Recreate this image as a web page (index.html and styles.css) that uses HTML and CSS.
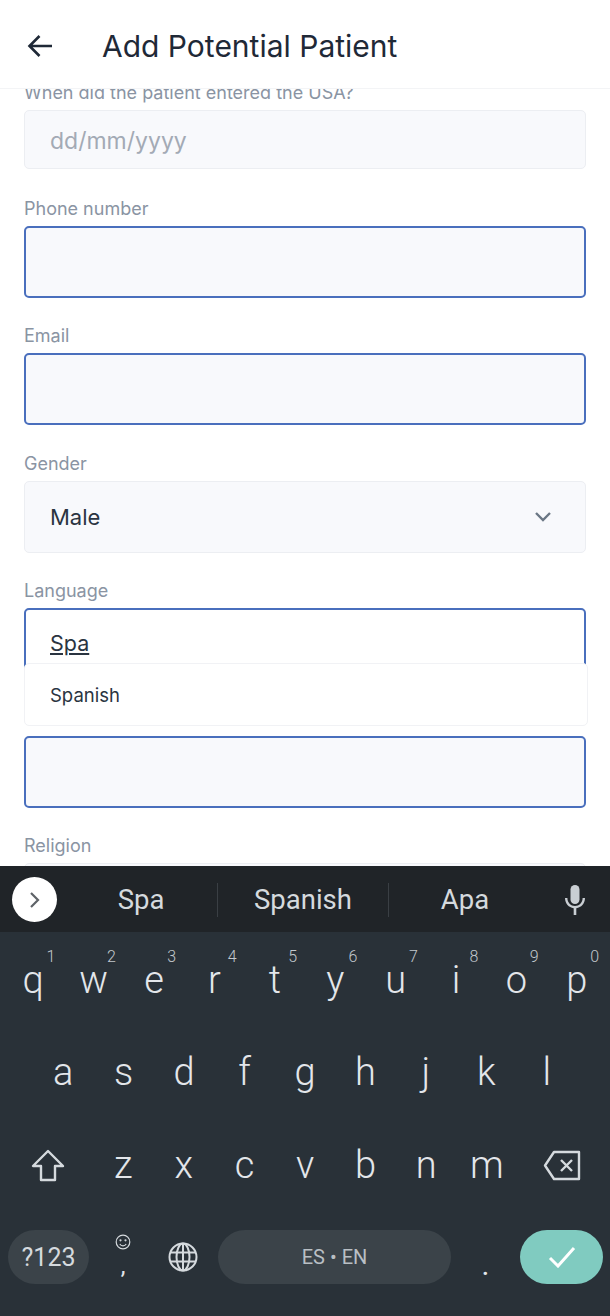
FILE: index.html
```html
<!DOCTYPE html>
<html lang="en">
<head>
    <meta charset="UTF-8">
    <meta name="viewport" content="width=device-width, initial-scale=1.0">
    <title>Add Potential Patient</title>
    <link rel="stylesheet" href="styles.css">
</head>
<body>
    <div class="screen">
        <header class="topbar">
            <svg class="back-icon" width="26" height="24" viewBox="0 0 26 24" fill="none" stroke="#1f2937" stroke-width="2.6">
                <path d="M25 12H2.5M12.5 2L2.5 12l10 10"/>
            </svg>
            <h1>Add Potential Patient</h1>
        </header>

        <main class="form">
            <div class="field first">
                <label>When did the patient entered the USA?</label>
                <div class="input short placeholder">dd/mm/yyyy</div>
            </div>
            <div class="field">
                <label>Phone number</label>
                <div class="input focused"></div>
            </div>
            <div class="field">
                <label>Email</label>
                <div class="input focused"></div>
            </div>
            <div class="field">
                <label>Gender</label>
                <div class="input select">
                    <span>Male</span>
                    <svg width="18" height="11" viewBox="0 0 18 11" fill="none" stroke="#6b7785" stroke-width="2.4">
                        <path d="M2 2l7 7 7-7"/>
                    </svg>
                </div>
            </div>
            <div class="field language">
                <label>Language</label>
                <div class="input typing"><u>Spa</u></div>
                <!-- Autocomplete dropdown -->
                <div class="dropdown">Spanish</div>
            </div>
            <div class="field after-language">
                <div class="input focused"></div>
            </div>
            <div class="field">
                <label>Religion</label>
                <div class="input"></div>
            </div>
        </main>

        <section class="keyboard">
            <div class="suggestions">
                <span class="expand">
                    <svg width="14" height="20" viewBox="0 0 14 20" fill="none" stroke="#5f6368" stroke-width="2.2">
                        <path d="M3 3l7 7-7 7"/>
                    </svg>
                </span>
                <span class="word first-word">Spa</span>
                <span class="word mid-word">Spanish</span>
                <span class="word last-word">Apa</span>
                <svg class="mic" width="22" height="30" viewBox="0 0 22 30" fill="#c9ced3">
                    <rect x="6.500" y="0" width="9" height="19" rx="4.500"/>
                    <path d="M1 13h2.400c0 4.600 3.400 8 7.600 8s7.600-3.400 7.600-8H21c0 5.400-3.800 9.600-8.700 10.200V30H9.700v-6.800C4.800 22.600 1 18.400 1 13z"/>
                </svg>
            </div>

            <div class="keys">
                <div class="row top-row">
                    <span class="key">q<sup>1</sup></span>
                    <span class="key">w<sup>2</sup></span>
                    <span class="key">e<sup>3</sup></span>
                    <span class="key">r<sup>4</sup></span>
                    <span class="key">t<sup>5</sup></span>
                    <span class="key">y<sup>6</sup></span>
                    <span class="key">u<sup>7</sup></span>
                    <span class="key">i<sup>8</sup></span>
                    <span class="key">o<sup>9</sup></span>
                    <span class="key">p<sup>0</sup></span>
                </div>
                <div class="row mid-row">
                    <span class="key">a</span>
                    <span class="key">s</span>
                    <span class="key">d</span>
                    <span class="key">f</span>
                    <span class="key">g</span>
                    <span class="key">h</span>
                    <span class="key">j</span>
                    <span class="key">k</span>
                    <span class="key">l</span>
                </div>
                <div class="row shift-row">
                    <span class="key side">
                        <svg width="34" height="33" viewBox="0 0 34 33" fill="none" stroke="#d5dade" stroke-width="2.400" stroke-linejoin="round">
                            <path d="M17 2L2 17h8v14h14V17h8z"/>
                        </svg>
                    </span>
                    <span class="key">z</span>
                    <span class="key">x</span>
                    <span class="key">c</span>
                    <span class="key">v</span>
                    <span class="key">b</span>
                    <span class="key">n</span>
                    <span class="key">m</span>
                    <span class="key side">
                        <svg width="38" height="31" viewBox="0 0 38 31" fill="none" stroke="#d5dade" stroke-width="2.400" stroke-linejoin="round">
                            <path d="M11 2h25v27H11L2 15.500z"/>
                            <path d="M18 10l11 11M29 10L18 21"/>
                        </svg>
                    </span>
                </div>
                <div class="row bottom-row">
                    <span class="pill symbols">?123</span>
                    <span class="comma">
                        <svg width="16" height="16" viewBox="0 0 16 16" fill="none" stroke="#d5dade" stroke-width="1.200">
                            <circle cx="8" cy="8" r="6.800"/>
                            <circle cx="5.500" cy="6.300" r="0.500"/>
                            <circle cx="10.500" cy="6.300" r="0.500"/>
                            <path d="M4.800 10c.8 1.300 1.900 1.800 3.200 1.800s2.400-.5 3.200-1.800"/>
                        </svg>
                        <b>,</b>
                    </span>
                    <svg class="globe" width="30" height="30" viewBox="0 0 30 30" fill="none" stroke="#d5dade" stroke-width="2">
                        <circle cx="15" cy="15" r="13.500"/>
                        <ellipse cx="15" cy="15" rx="6.500" ry="13.500"/>
                        <path d="M15 1.500v27M2.500 10.500h25M2.500 19.500h25"/>
                    </svg>
                    <span class="pill space">ES • EN</span>
                    <span class="period">.</span>
                    <span class="pill enter">
                        <svg width="28" height="22" viewBox="0 0 28 22" fill="none" stroke="#fff" stroke-width="3">
                            <path d="M2 12l8 8L26 2"/>
                        </svg>
                    </span>
                </div>
            </div>
        </section>
    </div>
</body>
</html>
```
FILE: styles.css
```css
* {
    box-sizing: border-box;
}

html, body {
    margin: 0;
    padding: 0;
}

body {
    font-family: Inter, "Noto Sans", sans-serif;
    background-color: #fff;
}

.screen {
    width: 610px;
    height: 1316px;
    display: flex;
    flex-direction: column;
    overflow: hidden;
}

.topbar {
    height: 89px;
    flex: none;
    display: flex;
    align-items: center;
    padding: 4px 0 0 27px;
    border-bottom: 1px solid #f3f4f6;
}

.topbar h1 {
    margin: 0 0 0 49px;
    font-size: 30px;
    font-weight: 400;
    color: #1f2937;
}

.form {
    height: 777px;
    flex: none;
    overflow: hidden;
    padding: 0 24px;
}

.field {
    margin-bottom: 25.500px;
    position: relative;
}

.field.first {
    margin-top: -9px;
    margin-bottom: 26.500px;
}

.field.language {
    z-index: 2;
}

/* label of this field sits under the dropdown */
.field.after-language {
    padding-top: 30px;
}

.field label {
    display: block;
    height: 26px;
    margin-bottom: 4px;
    font-size: 18px;
    line-height: 26px;
    color: #8a94a3;
}

.input {
    height: 72px;
    width: 562px;
    padding: 0 25px;
    display: flex;
    align-items: center;
    justify-content: space-between;
    font-size: 22px;
    color: #2a3441;
    background-color: #f8f9fc;
    border: 1px solid #eceef2;
    border-radius: 5px;
}

.input.short {
    height: 59px;
}

.placeholder {
    padding-top: 2px;
    font-size: 23px;
    color: #a3aab5;
}

.input.focused {
    border: 2px solid #4a6fbd;
}

.input.select {
    padding-right: 33px;
}

.input.typing {
    background-color: #fff;
    border: 2px solid #4a6fbd;
    align-items: flex-start;
    padding: 20px 24px 0;
    font-size: 21.500px;
}

.dropdown {
    position: absolute;
    top: 85px;
    left: 0;
    width: 564px;
    height: 63px;
    padding: 0 25px;
    display: flex;
    align-items: center;
    font-size: 18.500px;
    color: #2a3441;
    background-color: #fff;
    border: 1px solid #f1f2f5;
    border-radius: 5px;
}

.keyboard {
    flex: 1;
    display: flex;
    flex-direction: column;
    font-family: Roboto, "Liberation Sans", sans-serif;
    background-color: #293138;
    color: #e3e6ea;
}

.suggestions {
    height: 66px;
    flex: none;
    position: relative;
    display: flex;
    align-items: center;
    padding-top: 1px;
    background-color: #202428;
    font-size: 27.500px;
}

.expand {
    width: 45px;
    height: 45px;
    margin-left: 12px;
    flex: none;
    display: flex;
    align-items: center;
    justify-content: center;
    border-radius: 50%;
    background-color: #fff;
}

.word {
    height: 34px;
    display: flex;
    align-items: center;
    justify-content: center;
    color: #d5dade;
}

.first-word {
    width: 160px;
    padding-left: 8px;
}

.mid-word {
    width: 172px;
    border-left: 1px solid #3a3f44;
    border-right: 1px solid #3a3f44;
}

.last-word {
    width: 152px;
}

.mic {
    margin-left: 23px;
}

.keys {
    flex: 1;
    padding-top: 2px;
}

.row {
    height: 92px;
    display: flex;
    align-items: center;
    font-size: 38px;
}

.top-row {
    padding: 0 3px;
}

.mid-row {
    padding: 0 33px;
}

.shift-row {
    height: 94px;
    padding: 0 3px;
}

.key {
    flex: 1;
    position: relative;
    text-align: center;
    display: flex;
    justify-content: center;
    align-items: center;
    height: 60px;
    font-weight: 300;
}

.key.side {
    flex: none;
    width: 90px;
}

.key sup {
    position: absolute;
    top: -2px;
    right: 8px;
    font-size: 16px;
    line-height: 18px;
    color: #c2c8cd;
}

.bottom-row {
    padding: 0 7px 0 8px;
    height: 54px;
    margin-top: 18px;
    font-size: 18px;
}

.pill {
    height: 54px;
    display: flex;
    align-items: center;
    justify-content: center;
    border-radius: 27px;
    background-color: #3b4349;
}

.symbols {
    width: 81px;
    font-size: 25px;
    color: #d5dade;
}

.comma {
    width: 68px;
    display: flex;
    flex-direction: column;
    align-items: center;
    font-size: 24px;
    line-height: 22px;
    margin-top: -4px;
}

.comma b {
    font-weight: 400;
    margin-top: 5px;
}

.globe {
    margin-left: 11px;
}

.space {
    width: 233px;
    margin-left: 20px;
    font-size: 20px;
    color: #b9bfc4;
}

.period {
    width: 69px;
    text-align: center;
    font-size: 30px;
    margin-top: 14px;
}

.enter {
    width: 83px;
    background-color: #80cbc0;
}
```
